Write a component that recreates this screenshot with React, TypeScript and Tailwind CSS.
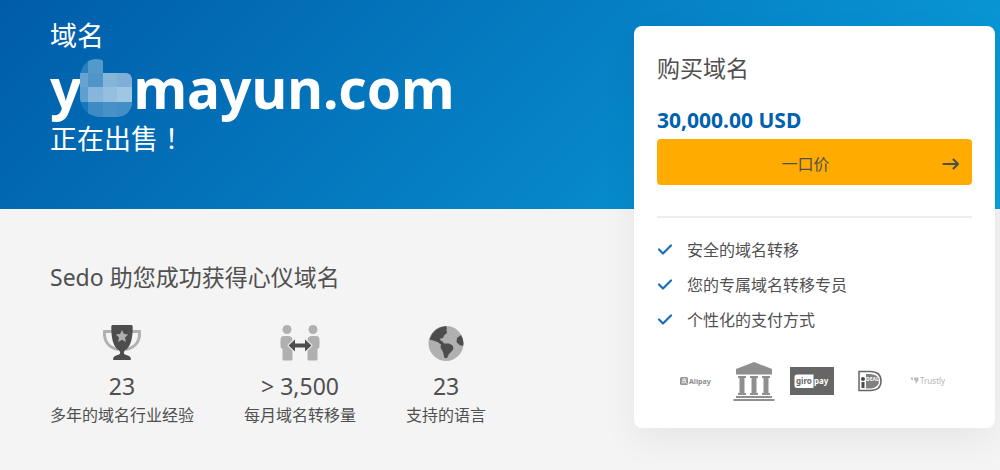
const benefits = ["安全的域名转移", "您的专属域名转移专员", "个性化的支付方式"];

function CheckIcon() {
  return (
    <svg width="16" height="16" viewBox="0 0 16 16" aria-hidden="true">
      <path
        d="M2 7.500L6 11.500L14 3.500"
        fill="none"
        stroke="#1a6cb6"
        strokeWidth="2.200"
        strokeLinecap="round"
        strokeLinejoin="round"
      />
    </svg>
  );
}

function TrophyIcon() {
  return (
    <svg width="40" height="36" viewBox="0 0 40 36" aria-hidden="true">
      <g fill="none" stroke="#b0b0b0" strokeWidth="3">
        <path d="M10 6.500H2.500C2 14 5 22.500 16 24.500" />
        <path d="M30 6.500H37.500C38 14 35 22.500 24 24.500" />
      </g>
      <path
        fill="#4d4d4d"
        d="M11 0H29C30 0 30.700 0.700 30.700 1.600C30.700 12 29.500 21.500 22.500 26C21.500 27 21.800 29 23 29.500L27 31C28.500 31.700 29 33 28.800 35H11.200C11 33 11.500 31.700 13 31L17 29.500C18.200 29 18.500 27 17.500 26C10.500 21.500 9.300 12 9.300 1.600C9.300 0.700 10 0 11 0Z"
      />
      <path
        fill="#b0b0b0"
        d="M20 5L21.900 9L26.200 9.500L23 12.500L23.900 17L20 14.800L16.100 17L17 12.500L13.800 9.500L18.100 9Z"
      />
    </svg>
  );
}

function TransferIcon() {
  return (
    <svg width="40" height="36" viewBox="0 0 40 36" aria-hidden="true">
      <g fill="#b0b0b0">
        <circle cx="7" cy="4.500" r="4.500" />
        <circle cx="33" cy="4.500" r="4.500" />
        <path d="M4 11H8C11 11 12.500 13 12.500 15V34Q12.500 35.500 11 35.500H4Q2.500 35.500 2.500 34V24Q0.500 23.500 0.500 21V15Q0.500 11 4 11Z" />
        <path d="M36 11H32C29 11 27.500 13 27.500 15V34Q27.500 35.500 29 35.500H36Q37.500 35.500 37.500 34V24Q39.500 23.500 39.500 21V15Q39.500 11 36 11Z" />
      </g>
      <path
        fill="#4d4d4d"
        stroke="#f4f4f4"
        strokeWidth="2"
        paintOrder="stroke"
        strokeLinejoin="round"
        d="M8.500 20.500L15 14.500V18.500H25V14.500L31.500 20.500L25 26.500V22.500H15V26.500Z"
      />
    </svg>
  );
}

function GlobeIcon() {
  return (
    <svg width="36" height="36" viewBox="0 0 36 36" aria-hidden="true">
      <circle cx="18" cy="18.500" r="17.500" fill="#b0b0b0" />
      <g fill="#4d4d4d">
        <path d="M18 1Q19.500 3 18.500 5L19 8L16 10.500L15 13L12.500 13.500L12 15L14.500 16.500L16 18.500L21 18.500Q23 19 25 21Q26 23.500 24 26L21 29L19 33L16.500 33L15 27L12.500 22.500L13 19.500L9.500 17L5 15.500L1.500 14.500Q4.500 3 18 1Z" />
        <path d="M33 10Q36.500 16 35 21L31.500 20L28.500 17L29 13Z" />
      </g>
    </svg>
  );
}

function Mosaic() {
  return (
    <svg
      width="52"
      height="58"
      viewBox="0 0 52 58"
      className="-ml-px mr-px shrink-0"
      aria-hidden="true"
    >
      <clipPath id="blob">
        <path d="M0 15Q4 1 15 0Q22 0 23 2V14H46Q51 14 52 20V46Q49 57 38 58H20Q3 57 0 40Z" />
      </clipPath>
      <g clipPath="url(#blob)" shapeRendering="crispEdges">
        <rect width="8" height="14" fill="#2880c0" />
        <rect x="8" width="15" height="14" fill="#539aca" />
        <rect y="14" width="8" height="14" fill="#67a4d2" />
        <rect x="8" y="14" width="15" height="14" fill="#5095ca" />
        <rect x="23" y="14" width="14" height="14" fill="#86b5da" />
        <rect x="37" y="14" width="15" height="14" fill="#7eb0d7" />
        <rect y="28" width="8" height="15" fill="#5d9fce" />
        <rect x="8" y="28" width="15" height="15" fill="#87b5db" />
        <rect x="23" y="28" width="14" height="15" fill="#94bfdf" />
        <rect x="37" y="28" width="15" height="15" fill="#9fc6e3" />
        <rect y="43" width="8" height="15" fill="#1877bc" />
        <rect x="8" y="43" width="15" height="15" fill="#3d8bc5" />
        <rect x="23" y="43" width="14" height="15" fill="#4890c8" />
        <rect x="37" y="43" width="15" height="15" fill="#428ec7" />
      </g>
    </svg>
  );
}

function AlipayLogo() {
  return (
    <svg width="34" height="12" viewBox="0 0 34 12" aria-label="Alipay">
      <rect x="1" y="2" width="8" height="8" rx="1.500" fill="#969696" />
      <path
        d="M3 4H7.500M5.300 3V5.500M3 5.500H7C6.500 8 3.500 9 3 7.500S6.500 7 8.500 8.800"
        fill="none"
        stroke="#f4f4f4"
        strokeWidth="0.800"
      />
      <text x="10" y="9" fontSize="7" fontWeight="700" fill="#8c8c8c">
        Alipay
      </text>
    </svg>
  );
}

function BankLogo() {
  return (
    <svg width="42" height="40" viewBox="0 0 42 40" fill="#8f8f8f" aria-label="Bank">
      <path d="M21 1L39 8V13.500H3V8Z" />
      <path d="M5 15H13V17H11.500V32H13V34H5V32H6.500V17H5Z" />
      <path d="M17 15H25V17H23.500V32H25V34H17V32H18.500V17H17Z" />
      <path d="M29 15H37V17H35.500V32H37V34H29V32H30.500V17H29Z" />
      <path d="M3 35H39V37H3ZM0.500 38H41.500V40H0.500Z" />
    </svg>
  );
}

function GiropayLogo() {
  return (
    <svg width="44" height="28" viewBox="0 0 44 28" aria-label="giropay">
      <rect width="44" height="28" fill="#666" />
      <path
        d="M7 7.500H23.500V21H7Q4.500 21 4.500 18.500V10Q4.500 7.500 7 7.500Z"
        fill="#fff"
      />
      <g fontSize="8" fontWeight="700">
        <text x="6" y="17" fill="#666">
          giro
        </text>
        <text x="24" y="17" fill="#fff">
          pay
        </text>
      </g>
    </svg>
  );
}

function IdealLogo() {
  return (
    <svg width="24" height="22" viewBox="0 0 24 22" aria-label="iDEAL">
      <path
        d="M1 1.500H12Q23 1.500 23 11T12 20.500H1Z"
        fill="#fff"
        stroke="#666"
        strokeWidth="1.500"
      />
      <path d="M8 4H12.500Q21 4.500 21 11T12.500 18.500H8Z" fill="#808080" />
      <circle cx="5" cy="9" r="2" fill="#4a4a4a" />
      <path d="M3.500 12H6.500V18H3.500Z" fill="#4a4a4a" />
      <text x="8" y="11" fontSize="5" fontWeight="700" fill="#fff">
        DEAL
      </text>
    </svg>
  );
}

function TrustlyLogo() {
  return (
    <svg width="36" height="12" viewBox="0 0 36 12" aria-label="Trustly">
      <path
        d="M0.500 2.500H3V5H1.500ZM4 2.500H8.500V5.500L5.500 9V6L4 5Z"
        fill="#bdbdbd"
      />
      <text x="10" y="9" fontSize="8" fill="#b4b4b4">
        Trustly
      </text>
    </svg>
  );
}

const stats = [
  { icon: <TrophyIcon />, value: "23", label: "多年的域名行业经验" },
  { icon: <TransferIcon />, value: "> 3,500", label: "每月域名转移量" },
  { icon: <GlobeIcon />, value: "23", label: "支持的语言" },
];

export default function App() {
  return (
    <div className="min-h-screen bg-[#f4f4f4] font-['Noto_Sans','Noto_Sans_CJK_SC',sans-serif] text-[#505050]">
      <div className="flex min-h-screen items-start justify-between bg-[linear-gradient(135deg,#005ca9,#0aa0dc)] bg-[length:100%_209px] bg-no-repeat pr-[5px] pl-[50px]">
        <main className="min-w-0 flex-1">
          <h1 className="flex h-[209px] flex-col pt-4 text-[27px] leading-10 text-white">
            <span>域名</span>
            <span className="flex h-16 items-center text-[55px] leading-16 font-bold">
              y
              <Mosaic />
              mayun.com
            </span>
            <span className="font-['Noto_Sans_CJK_TC',sans-serif] leading-9">
              正在出售！
            </span>
          </h1>

          <section className="pt-12">
            <h2 className="text-[23px] leading-10">
              Sedo 助您成功获得心仪域名
            </h2>
            <ul className="mt-7 flex gap-[50px]">
              {stats.map((stat) => (
                <li key={stat.label} className="flex flex-col items-center">
                  {stat.icon}
                  <p className="mt-2 text-[23px] leading-[34px]">
                    {stat.value}
                  </p>
                  <p className="text-[16px] leading-6">{stat.label}</p>
                </li>
              ))}
            </ul>
          </section>
        </main>

        <aside className="mt-[26px] w-[361px] shrink-0 rounded-lg bg-white px-[23px] pt-6 pb-[27px] shadow-[0_12px_36px_rgba(0,0,0,0.06)]">
          <h2 className="text-[23px] leading-9">购买域名</h2>
          <p className="mt-5 text-[21px] leading-7 font-bold text-[#0061af]">
            30,000.00 USD
          </p>
          <button
            type="button"
            className="mt-[5px] flex h-[46px] w-full items-center rounded bg-[#ffab00] px-3 pt-1 text-[16px]"
          >
            <span className="flex-1">一口价</span>
            <svg width="18" height="16" viewBox="0 0 18 16" aria-hidden="true">
              <path
                d="M1.500 8H16M11.500 3.500L16 8L11.500 12.500"
                fill="none"
                stroke="#4d4d4d"
                strokeWidth="2"
                strokeLinecap="round"
                strokeLinejoin="round"
              />
            </svg>
          </button>
          <hr className="mt-[31px] border-t-2 border-[#ededed]" />
          <ul className="mt-[14px]">
            {benefits.map((benefit) => (
              <li
                key={benefit}
                className="flex h-[35px] items-center gap-[14px] text-[16px]"
              >
                <CheckIcon />
                {benefit}
              </li>
            ))}
          </ul>
          <div className="mt-6 grid h-10 grid-cols-5 place-items-center pr-[15px] pl-[10px]">
            <AlipayLogo />
            <BankLogo />
            <GiropayLogo />
            <IdealLogo />
            <TrustlyLogo />
          </div>
        </aside>
      </div>
    </div>
  );
}
